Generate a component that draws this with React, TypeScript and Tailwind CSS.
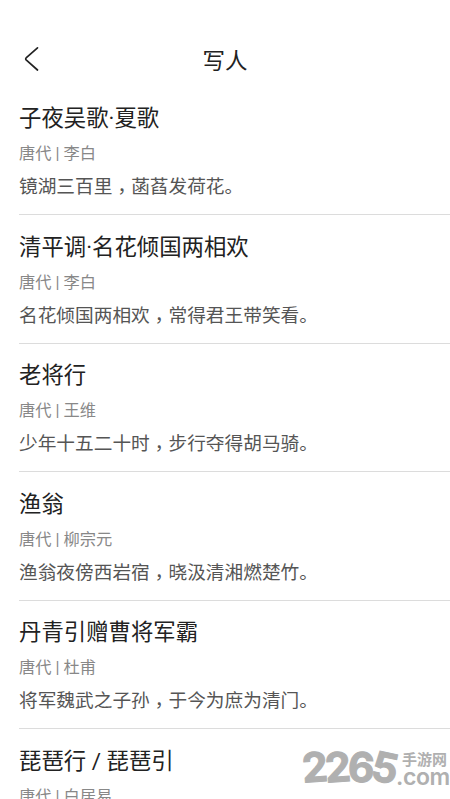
import React from 'react';

interface Poem {
  id: number;
  title: string;
  dynasty: string;
  author: string;
  lines: [string, string];
}

const poems: Poem[] = [
  { id: 1, title: '子夜吴歌·夏歌', dynasty: '唐代', author: '李白', lines: ['镜湖三百里', '菡萏发荷花'] },
  { id: 2, title: '清平调·名花倾国两相欢', dynasty: '唐代', author: '李白', lines: ['名花倾国两相欢', '常得君王带笑看'] },
  { id: 3, title: '老将行', dynasty: '唐代', author: '王维', lines: ['少年十五二十时', '步行夺得胡马骑'] },
  { id: 4, title: '渔翁', dynasty: '唐代', author: '柳宗元', lines: ['渔翁夜傍西岩宿', '晓汲清湘燃楚竹'] },
  { id: 5, title: '丹青引赠曹将军霸', dynasty: '唐代', author: '杜甫', lines: ['将军魏武之子孙', '于今为庶为清门'] },
  { id: 6, title: '琵琶行 / 琵琶引', dynasty: '唐代', author: '白居易', lines: ['浔阳江头夜送客', '枫叶荻花秋瑟瑟'] },
];

const BackIcon = () => (
  <svg width="18" height="26" viewBox="0 0 18 26" fill="none" stroke="currentColor" strokeWidth="1.7" strokeLinecap="round" strokeLinejoin="round">
    <path d="M15.5 1.8 4.4 11.6Q3 12.9 4.4 14.2L15.5 24" />
  </svg>
);

const Header = ({ title }: { title: string }) => (
  <header className="grid h-[86.4px] shrink-0 grid-cols-[1fr_auto_1fr] items-center px-[22px] pt-[32px]">
    <button aria-label="返回" className="justify-self-start text-[#222]">
      <BackIcon />
    </button>
    <h1 className="pt-[3px] text-[22.5px] leading-8">{title}</h1>
  </header>
);

const PoemRow = ({ poem }: { poem: Poem }) => (
  <li className="h-[128.6px] shrink-0 border-b border-[#dcdcdc] pt-[14.6px]">
    <h2 className="text-[22.4px] leading-[34px] text-[#222]">{poem.title}</h2>
    <p className="mt-[7px] text-[16.25px] leading-[24px] text-[#888]">{poem.dynasty} | {poem.author}</p>
    <p className="mt-[7px] text-[18.7px] leading-[28px] text-[#555]">
      {poem.lines[0]}
      <span className="relative top-[5px] leading-none font-['Noto_Sans_CJK_TC',sans-serif]" lang="zh-Hant">，</span>
      {poem.lines[1]}。
    </p>
  </li>
);

const Watermark = () => (
  <div className="absolute right-0 bottom-[14px] flex items-end text-[#b0b0b0]">
    <div className="flex font-[Inter,sans-serif] text-[41px] leading-[36px] font-bold tracking-[-2.6px] [-webkit-text-stroke:1px_#b0b0b0]">
      <span className="-rotate-4">2</span>
      <span className="-rotate-4">2</span>
      <span className="rotate-3">6</span>
      <span className="rotate-12">5</span>
    </div>
    <div className="flex w-[54px] flex-col">
      <span className="pl-[6px] text-[15px] leading-[18px] font-bold">手游网</span>
      <span className="font-[Inter,sans-serif] text-[23px] leading-[16px] font-semibold tracking-[-0.4px]">.com</span>
    </div>
  </div>
);

export default function App() {
  return (
    <div className="relative flex h-screen w-full flex-col overflow-hidden bg-white font-[Roboto,'Noto_Sans_CJK_SC',sans-serif] text-[#222]">
      <Header title="写人" />
      <ul className="flex flex-col pl-[19px]">
        {poems.map(poem => <PoemRow key={poem.id} poem={poem} />)}
      </ul>
      <Watermark />
    </div>
  );
}
